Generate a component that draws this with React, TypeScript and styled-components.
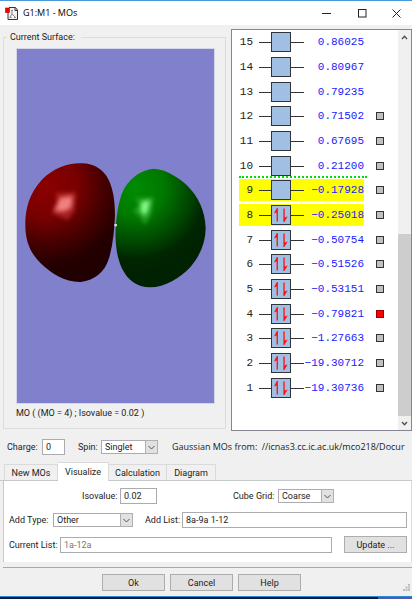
import React, { useState } from 'react';
import styled, { createGlobalStyle, css } from 'styled-components';

const UI = 'Roboto, "Liberation Sans", sans-serif';
const HUMANIST = '"Open Sans", "Noto Sans", sans-serif';

const GlobalStyle = createGlobalStyle`
  *, *::before, *::after { box-sizing: border-box; }
  body { margin: 0; background: #f0f0f0; color: #222; font: 9px/12px ${UI}; }
  button, input, select { font: inherit; color: inherit; margin: 0; border-radius: 0; }
`;

const Window = styled.div`
  display: flex;
  flex-direction: column;
  border-top: 1px solid #4a9add;
`;

const TitleBar = styled.header`
  display: flex;
  align-items: center;
  height: 24px;
  padding-left: 5px;
  background: #fff;
`;

const Title = styled.h1`
  flex: 1;
  margin: 0 0 0 4px;
  font: 400 9px/12px ${HUMANIST};
  color: #000;
`;

const CaptionButton = styled.button`
  display: grid;
  place-items: center;
  width: 36px;
  height: 24px;
  padding: 0;
  border: 0;
  background: transparent;

  &:last-child { width: 32px; }
`;

const Main = styled.main`
  display: grid;
  grid-template-columns: 223fr 181fr;
  gap: 5px;
  padding: 4px 0 0 3px;
`;

const SurfaceGroup = styled.fieldset`
  display: flex;
  flex-direction: column;
  min-width: 0;
  margin: 2px 0;
  padding: 5px 10px 9px 12px;
  border: 1px solid #dcdcdc;

  legend { padding: 0 6px 0 3px; margin-left: -9px; }
`;

const Viewport = styled.div`
  display: flex;
  border: 1px solid #d5d5e8;
  background: #8080cc;

  svg { display: block; width: 100%; height: 354px; }
`;

const SurfaceCaption = styled.p`
  margin: 3px 0 0;
`;

const OrbitalPanel = styled.section`
  display: flex;
  height: 402px;
  border: 1px solid #828790;
  background: #fff;
`;

const OrbitalList = styled.ul`
  flex: 1;
  display: grid;
  grid-template-rows: repeat(15, 1fr);
  height: 370px;
  margin: 0;
  padding: 0 0 0 7px;
  list-style: none;
`;

const OrbitalRow = styled.li<{ $separator?: boolean }>`
  position: relative;
  display: flex;
  align-items: center;

  ${p => p.$separator && css`
    &::before {
      content: '';
      position: absolute;
      top: -2px;
      left: 0;
      width: 128px;
      border-top: 2px dotted #00e000;
    }
  `}
`;

const Level = styled.label<{ $active?: boolean }>`
  display: grid;
  grid-template-columns: 14px 45px minmax(0, 1fr);
  column-gap: 6px;
  align-items: center;
  width: 125px;
  height: 22px;
  background: ${p => (p.$active ? '#ffff00' : 'transparent')};
  font: 11px/20px "Liberation Mono", monospace;
  text-align: right;
`;

const Energy = styled.span`
  display: flex;
  justify-content: flex-end;
  color: #1a1aff;
`;

const LevelMark = styled.input`
  appearance: none;
  width: 8px;
  height: 8px;
  margin-left: 12px;
  border: 1px solid #333;
  background: #c0c0c0;

  &:checked { background: #ff0000; border-color: #900; }
`;

const ScrollBar = styled.div`
  display: flex;
  flex-direction: column;
  width: 13px;
  background: #f0f0f0;
`;

const ScrollButton = styled.button`
  display: grid;
  place-items: center;
  height: 14px;
  padding: 0;
  border: 0;
  background: transparent;
`;

const ScrollTrack = styled.div`
  flex: 1;
  display: flex;
  align-items: flex-end;
`;

const ScrollThumb = styled.div`
  width: 100%;
  height: 49%;
  background: #cdcdcd;
`;

const FormRow = styled.div`
  display: flex;
  align-items: center;
  white-space: nowrap;
`;

const StateBar = styled(FormRow)`
  height: 31px;
  padding: 0 4px 0 7px;
`;

const Label = styled.label<{ $w: number }>`
  flex: none;
  width: ${p => p.$w}px;
`;

const SpinLabel = styled(Label)`
  padding-left: 13px;
`;

const AddListLabel = styled(Label)`
  margin-left: 12px;
`;

const TextBox = styled.input<{ $w?: number }>`
  ${p => (p.$w ? `width: ${p.$w}px;` : 'flex: 1; min-width: 0;')}
  height: 16px;
  padding: 0 3px;
  border: 1px solid #ababb0;
  background: #fff;

  &:disabled { color: #777; }
`;

const SelectFrame = styled.span<{ $w: number }>`
  position: relative;
  width: ${p => p.$w}px;
  height: 14px;

  svg {
    position: absolute;
    top: 0;
    right: 0;
    border: 1px solid #b0b0b0;
    background: #e1e1e1;
    pointer-events: none;
  }
`;

const NativeSelect = styled.select`
  appearance: none;
  display: block;
  width: 100%;
  height: 14px;
  padding: 0 14px 0 3px;
  border: 1px solid #ababb0;
  background: #fff;
  line-height: 12px;
`;

const Source = styled.p`
  flex: 1;
  min-width: 0;
  margin: 0 0 0 14px;
  overflow: hidden;
  font-family: ${HUMANIST};

  span { margin-left: 2px; }
`;

const TabList = styled.div`
  display: flex;
  align-items: flex-end;
  padding-left: 4px;
  border-bottom: 1px solid #c4c9c9;
`;

const Tab = styled.button<{ $w: number }>`
  width: ${p => p.$w}px;
  height: 16px;
  padding: 0;
  border: 1px solid #dadada;
  border-width: 1px 1px 0 0;
  background: #f0f0f0;

  &:first-child { border-left-width: 1px; }
  &[aria-selected='true'] {
    height: 19px;
    margin-bottom: -1px;
    background: #fff;
  }
`;

const TabPanel = styled.section`
  display: flex;
  flex-direction: column;
  gap: 8px;
  margin-left: 3px;
  padding: 7px 4px 9px 5px;
  border-left: 1px solid #c8c8c8;
  border-right: 1px solid #dcdcdc;
  background: #fff;
`;

const GridRow = styled(FormRow)`
  justify-content: space-between;
  padding: 0 73px;
`;

const Group = styled.div`
  display: flex;
  align-items: center;
`;

const PushButton = styled.button<{ $gap?: number }>`
  width: 63px;
  height: 17px;
  margin-left: ${p => p.$gap ?? 0}px;
  padding: 0;
  border: 1px solid #adadad;
  background: #e1e1e1;
`;

const Footer = styled.footer`
  position: relative;
  display: flex;
  justify-content: center;
  gap: 5px;
  margin: 5px 0 0 3px;
  padding: 6px 12px 5px 0;
  border-top: 1px solid #a8a8a8;

  > svg { position: absolute; right: 2px; bottom: 5px; }
`;

const Desktop = styled.div`
  display: flex;
  height: 3px;
  border-top: 1px solid #2a8ad4;
  background: #001b3a;

  &::after {
    content: '';
    width: 34px;
    margin-left: auto;
    background: #5558a8;
  }
`;

const AppIcon = () => (
  <svg width="14" height="15" viewBox="0 0 14 15" aria-hidden="true">
    <path d="M4 1.5h6.5l2 2.5v9.500H3V6" fill="#f4f4f4" stroke="#333" />
    <path d="M10 1.500v3h3" fill="none" stroke="#333" />
    <path d="M6 4.500h2M7 5v3M7 8l-2 3M7 8l3 3M4.500 11.500h2M9 11.500h2" fill="none" stroke="#888" />
    <rect x="0.500" y="2" width="4" height="4.500" fill="#f00000" stroke="#b00000" strokeWidth="0.600" />
  </svg>
);

const Chevron = ({ up = false }: { up?: boolean }) => (
  <svg width="7" height="5" viewBox="0 0 7 5" aria-hidden="true">
    <path d={up ? 'M1 4l2.500-2.700L6 4' : 'M1 1l2.500 2.700L6 1'} fill="none" stroke="#505050" strokeWidth="1.400" />
  </svg>
);

const LevelIcon = ({ filled }: { filled: boolean }) => (
  <svg width="45" height="20" viewBox="0 0 45 20" aria-hidden="true">
    <path d="M0 10.500h12M31 10.500h14" stroke="#333" />
    <rect x="12.500" y="0.500" width="19" height="19" fill="#a0bfe2" stroke="#30353b" />
    {filled && (
      <g fill="#ff1010">
        <path d="M18.900 16.500V3H17.900L15 8.500L17.600 7.500V16.500Z" />
        <path d="M24.400 3.500V17H25.400L28.600 11.500L25.700 12.500V3.500Z" />
      </g>
    )}
  </svg>
);

const Lobes = () => (
  <svg viewBox="0 0 196 354" preserveAspectRatio="xMinYMid meet" role="img" aria-label="Molecular orbital surface">
    <defs>
      <radialGradient id="red" gradientUnits="userSpaceOnUse" cx="110" cy="110" r="270">
        <stop offset="0" stopColor="#8c0000" />
        <stop offset="0.350" stopColor="#780000" />
        <stop offset="0.620" stopColor="#480000" />
        <stop offset="0.850" stopColor="#260000" />
        <stop offset="1" stopColor="#200000" />
      </radialGradient>
      <radialGradient id="green" gradientUnits="userSpaceOnUse" cx="375" cy="115" r="250">
        <stop offset="0" stopColor="#008c00" />
        <stop offset="0.350" stopColor="#007800" />
        <stop offset="0.650" stopColor="#004800" />
        <stop offset="0.850" stopColor="#002600" />
        <stop offset="1" stopColor="#002200" />
      </radialGradient>
      <filter id="glow" x="-40%" y="-40%" width="180%" height="180%">
        <feGaussianBlur stdDeviation="7" />
      </filter>
    </defs>
    <g transform="translate(-7 101) scale(0.3333)">
      <path
        d="M210 40C250 38 280 58 295 88C310 118 315 155 315 195C313 240 309 285 297 325C285 365 255 392 212 396C165 397 125 372 92 340C62 310 46 275 46 225C46 170 60 130 95 90C130 55 170 41 210 40Z"
        fill="url(#red)"
      />
      <path
        d="M430 56C395 60 365 80 345 112C327 142 320 190 317 235C315 280 320 320 335 353C352 390 380 411 420 412C465 411 510 385 542 350C572 315 587 275 587 235C585 180 565 140 530 105C500 78 465 58 430 56Z"
        fill="url(#green)"
      />
      <path d="M137 130L198 126L194 182L174 210L124 188L142 158Z" fill="#d03c3c" opacity="0.550" filter="url(#glow)" />
      <path d="M150 143L187 138L184 172L166 184L134 183Z" fill="#ff9090" opacity="0.850" filter="url(#glow)" />
      <path d="M374 145L432 142L424 192L405 226L390 198L368 184L388 166Z" fill="#30b030" opacity="0.700" filter="url(#glow)" />
      <path d="M394 157L420 150L414 180L404 198L392 182Z" fill="#90ff90" opacity="0.950" filter="url(#glow)" />
      <rect x="313" y="222" width="8" height="7" fill="#d8d8c8" />
    </g>
  </svg>
);

const SizeGrip = () => (
  <svg width="7" height="7" viewBox="0 0 7 7" aria-hidden="true">
    <path d="M5 0h2v2H5zM2.500 2.500h2v2h-2zM5 2.500h2v2H5zM0 5h2v2H0zM2.500 5h2v2h-2zM5 5h2v2H5z" fill="#bdbdbd" />
  </svg>
);

interface SelectProps { id: string; width: number; options: string[] }

const Select = ({ id, width, options }: SelectProps) => (
  <SelectFrame $w={width}>
    <NativeSelect id={id}>
      {options.map(option => <option key={option}>{option}</option>)}
    </NativeSelect>
    <svg width="13" height="14" viewBox="0 0 11 12" aria-hidden="true">
      <path d="M2.500 5l3 3 3-3" fill="none" stroke="#555" />
    </svg>
  </SelectFrame>
);

const energies = [
  '0.86025', '0.80967', '0.79235', '0.71502', '0.67695', '0.21200', '-0.17928', '-0.25018',
  '-0.50754', '-0.51526', '-0.53151', '-0.79821', '-1.27663', '-19.30712', '-19.30736',
];
const orbitals = energies.map((energy, i) => ({ n: 15 - i, energy: energy.replace('-', '\u2212') }));

const tabs = [
  { name: 'New MOs', width: 54 },
  { name: 'Visualize', width: 51 },
  { name: 'Calculation', width: 58 },
  { name: 'Diagram', width: 49 },
];

export default function App() {
  const [tab, setTab] = useState('Visualize');
  return (
    <>
      <GlobalStyle />
      <Window>
        <TitleBar>
          <AppIcon />
          <Title>G1:M1 - MOs</Title>
          <CaptionButton aria-label="Minimize">
            <svg width="9" height="9"><path d="M0 4.500h9" stroke="#222" /></svg>
          </CaptionButton>
          <CaptionButton aria-label="Maximize">
            <svg width="9" height="9"><rect x="0.500" y="0.500" width="7.500" height="7.500" fill="none" stroke="#222" /></svg>
          </CaptionButton>
          <CaptionButton aria-label="Close">
            <svg width="9" height="9"><path d="M0.500 0.500l8 8M8.500 0.500l-8 8" stroke="#222" /></svg>
          </CaptionButton>
        </TitleBar>

        <Main>
          <SurfaceGroup>
            <legend>Current Surface:</legend>
            <Viewport><Lobes /></Viewport>
            <SurfaceCaption>MO ( (MO = 4) ; Isovalue = 0.02 )</SurfaceCaption>
          </SurfaceGroup>
          <OrbitalPanel aria-label="Orbitals">
            <OrbitalList>
              {orbitals.map(({ n, energy }) => (
                <OrbitalRow key={n} $separator={n === 9}>
                  <Level htmlFor={n <= 12 ? `mo-${n}` : undefined} $active={n === 8 || n === 9}>
                    <span>{n}</span>
                    <LevelIcon filled={n <= 8} />
                    <Energy>{energy}</Energy>
                  </Level>
                  {n <= 12 && <LevelMark type="checkbox" id={`mo-${n}`} defaultChecked={n === 4} />}
                </OrbitalRow>
              ))}
            </OrbitalList>
            <ScrollBar>
              <ScrollButton aria-label="Scroll up"><Chevron up /></ScrollButton>
              <ScrollTrack><ScrollThumb /></ScrollTrack>
              <ScrollButton aria-label="Scroll down"><Chevron /></ScrollButton>
            </ScrollBar>
          </OrbitalPanel>
        </Main>

        <StateBar>
          <Label $w={35} htmlFor="charge">Charge:</Label>
          <TextBox $w={23} id="charge" defaultValue="0" />
          <SpinLabel $w={36} htmlFor="spin">Spin:</SpinLabel>
          <Select id="spin" width={57} options={['Singlet']} />
          <Source>Gaussian MOs from: <span>//icnas3.cc.ic.ac.uk/mco218/Docur</span></Source>
        </StateBar>

        <TabList role="tablist">
          {tabs.map(({ name, width }) => (
            <Tab key={name} role="tab" $w={width} aria-selected={tab === name} onClick={() => setTab(name)}>
              {name}
            </Tab>
          ))}
        </TabList>
        <TabPanel>
          <GridRow>
            <Group>
              <Label $w={38} htmlFor="iso">Isovalue:</Label>
              <TextBox $w={37} id="iso" defaultValue="0.02" />
            </Group>
            <Group>
              <Label $w={45} htmlFor="grid">Cube Grid:</Label>
              <Select id="grid" width={56} options={['Coarse']} />
            </Group>
          </GridRow>
          <FormRow>
            <Label $w={44} htmlFor="type">Add Type:</Label>
            <Select id="type" width={80} options={['Other']} />
            <AddListLabel $w={37} htmlFor="list">Add List:</AddListLabel>
            <TextBox id="list" defaultValue="8a-9a 1-12" />
          </FormRow>
          <FormRow>
            <Label $w={51} htmlFor="current">Current List:</Label>
            <TextBox id="current" defaultValue="1a-12a" disabled />
            <PushButton $gap={12}>Update ...</PushButton>
          </FormRow>
        </TabPanel>

        <Footer>
          <PushButton>Ok</PushButton>
          <PushButton>Cancel</PushButton>
          <PushButton>Help</PushButton>
          <SizeGrip />
        </Footer>
        <Desktop />
      </Window>
    </>
  );
}
